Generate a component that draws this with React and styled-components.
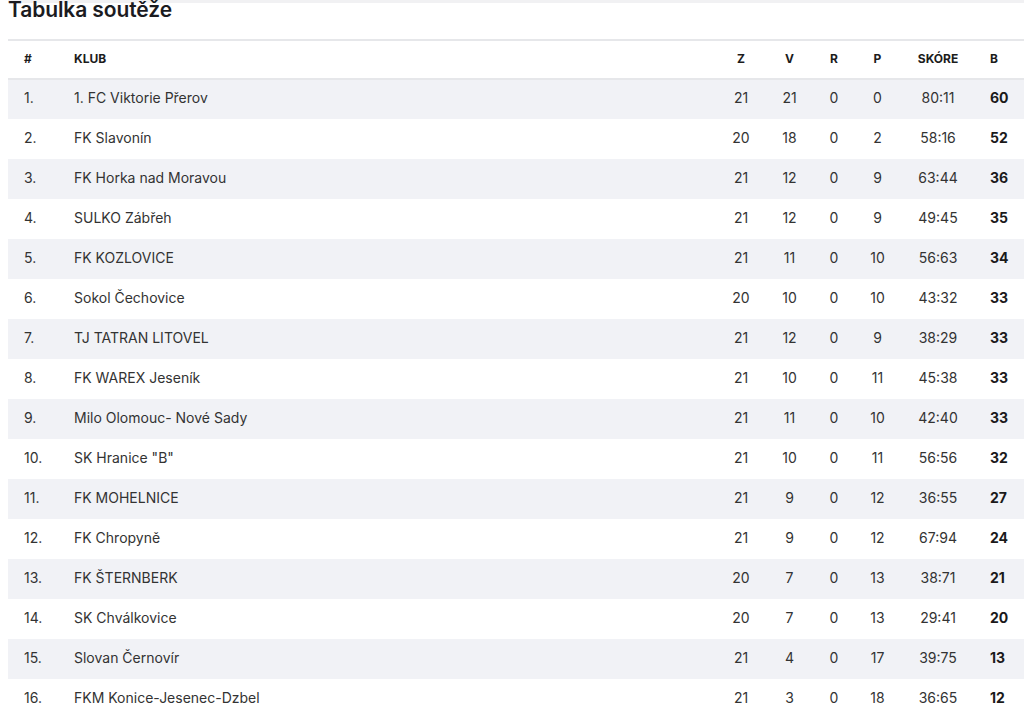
import styled, { createGlobalStyle } from "styled-components";

const GlobalStyle = createGlobalStyle`
  html, body {
    margin: 0;
    padding: 0;
    background: #ffffff;
    font-family: Inter, "Noto Sans", "Liberation Sans", sans-serif;
    color: #2e2e2e;
    overflow: hidden;
  }
`

const Page = styled.div`
  padding-left: 8px;
  width: 1016px;
`
const TopStrip = styled.div`
  height: 3px;
  background: #f1f1f3;
`
const TitleBar = styled.div`
  display: flex;
  align-items: flex-start;
  height: 36px;
`
const Title = styled.h2`
  margin: -5px 0 0 0;
  font-size: 21px;
  line-height: 24px;
  font-weight: 600;
  color: #1b1b1f;
  letter-spacing: -0.1px;
`

const Table = styled.table`
  width: 1016px;
  border-collapse: collapse;
  table-layout: fixed;
  font-size: 14px;
`
const HeadRow = styled.tr`
  height: 39px;
  border-top: 2px solid #e6e7ea;
  border-bottom: 2px solid #e6e7ea;
`
const Th = styled.th`
  padding: 0 0 3px ${p => p.$pad || 0}px;
  text-align: ${p => p.$align || "center"};
  font-size: 12px;
  font-weight: 700;
  color: #1c1c1c;
  text-transform: uppercase;
`
const Row = styled.tr`
  height: 40px;
  background: ${p => (p.$odd ? "#f1f2f6" : "#ffffff")};
`
const Td = styled.td`
  padding: 0 0 4px ${p => p.$pad || 0}px;
  text-align: ${p => p.$align || "center"};
  font-weight: ${p => (p.$bold ? 700 : 400)};
  color: ${p => (p.$bold ? "#1a1a1a" : "#333333")};
  white-space: nowrap;
`

const rows = [
  ["1. FC Viktorie Přerov", 21, 21, 0, 0, "80:11", 60],
  ["FK Slavonín", 20, 18, 0, 2, "58:16", 52],
  ["FK Horka nad Moravou", 21, 12, 0, 9, "63:44", 36],
  ["SULKO Zábřeh", 21, 12, 0, 9, "49:45", 35],
  ["FK KOZLOVICE", 21, 11, 0, 10, "56:63", 34],
  ["Sokol Čechovice", 20, 10, 0, 10, "43:32", 33],
  ["TJ TATRAN LITOVEL", 21, 12, 0, 9, "38:29", 33],
  ["FK WAREX Jeseník", 21, 10, 0, 11, "45:38", 33],
  ["Milo Olomouc- Nové Sady", 21, 11, 0, 10, "42:40", 33],
  ["SK Hranice \"B\"", 21, 10, 0, 11, "56:56", 32],
  ["FK MOHELNICE", 21, 9, 0, 12, "36:55", 27],
  ["FK Chropyně", 21, 9, 0, 12, "67:94", 24],
  ["FK ŠTERNBERK", 20, 7, 0, 13, "38:71", 21],
  ["SK Chválkovice", 20, 7, 0, 13, "29:41", 20],
  ["Slovan Černovír", 21, 4, 0, 17, "39:75", 13],
  ["FKM Konice-Jesenec-Dzbel", 21, 3, 0, 18, "36:65", 12],
]

function App() {
  return (
    <Page>
      <GlobalStyle />
      <TopStrip />
      <TitleBar>
        <Title>Tabulka soutěže</Title>
      </TitleBar>
      <Table>
        <colgroup>
          <col style={{ width: 50 }} />
          <col style={{ width: 658 }} />
          <col style={{ width: 50 }} />
          <col style={{ width: 47 }} />
          <col style={{ width: 42 }} />
          <col style={{ width: 45 }} />
          <col style={{ width: 76 }} />
          <col style={{ width: 48 }} />
        </colgroup>
        <thead>
          <HeadRow>
            <Th $align="left" $pad={16}>#</Th>
            <Th $align="left" $pad={16}>Klub</Th>
            <Th>Z</Th>
            <Th>V</Th>
            <Th>R</Th>
            <Th>P</Th>
            <Th>Skóre</Th>
            <Th $align="left" $pad={14}>B</Th>
          </HeadRow>
        </thead>
        <tbody>
          {rows.map((r, i) => (
            <Row key={i} $odd={i % 2 === 0}>
              <Td $align="left" $pad={16}>{i + 1}.</Td>
              <Td $align="left" $pad={16}>{r[0]}</Td>
              <Td>{r[1]}</Td>
              <Td>{r[2]}</Td>
              <Td>{r[3]}</Td>
              <Td>{r[4]}</Td>
              <Td>{r[5]}</Td>
              <Td $align="left" $pad={14} $bold>{r[6]}</Td>
            </Row>
          ))}
        </tbody>
      </Table>
    </Page>
  );
}

export default App;
